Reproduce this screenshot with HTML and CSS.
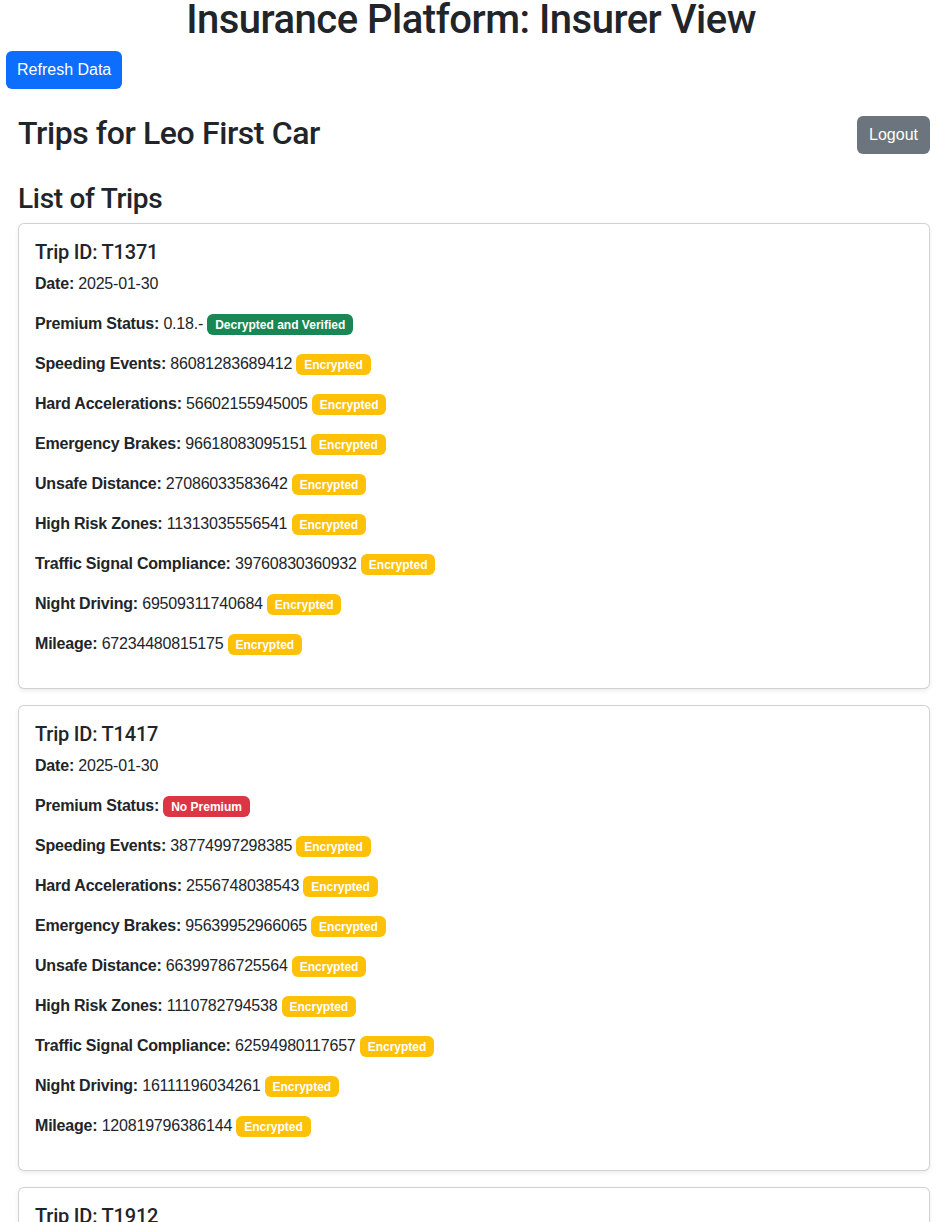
FILE: index.html
```html
<!DOCTYPE html>
<html lang="en">
<head>
<meta charset="utf-8">
<title>Insurance Platform: Insurer View</title>
<link rel="stylesheet" href="styles.css">
</head>
<body>
<div class="app">
  <h1 class="page-title">Insurance Platform: Insurer View</h1>
  <button class="btn btn-primary">Refresh Data</button>
  <div class="content">
    <div class="header-row">
      <h2 class="owner-title">Trips for Leo First Car</h2>
      <button class="btn btn-secondary">Logout</button>
    </div>
    <h3 class="list-title">List of Trips</h3>

    <div class="card">
      <h5 class="card-title">Trip ID: T1371</h5>
      <p><b>Date:</b> 2025-01-30</p>
      <p><b>Premium Status:</b> 0.18.- <span class="badge badge-success">Decrypted and Verified</span></p>
      <p><b>Speeding Events:</b> 86081283689412 <span class="badge badge-warning">Encrypted</span></p>
      <p><b>Hard Accelerations:</b> 56602155945005 <span class="badge badge-warning">Encrypted</span></p>
      <p><b>Emergency Brakes:</b> 96618083095151 <span class="badge badge-warning">Encrypted</span></p>
      <p><b>Unsafe Distance:</b> 27086033583642 <span class="badge badge-warning">Encrypted</span></p>
      <p><b>High Risk Zones:</b> 11313035556541 <span class="badge badge-warning">Encrypted</span></p>
      <p><b>Traffic Signal Compliance:</b> 39760830360932 <span class="badge badge-warning">Encrypted</span></p>
      <p><b>Night Driving:</b> 69509311740684 <span class="badge badge-warning">Encrypted</span></p>
      <p><b>Mileage:</b> 67234480815175 <span class="badge badge-warning">Encrypted</span></p>
    </div>

    <div class="card">
      <h5 class="card-title">Trip ID: T1417</h5>
      <p><b>Date:</b> 2025-01-30</p>
      <p><b>Premium Status:</b> <span class="badge badge-danger">No Premium</span></p>
      <p><b>Speeding Events:</b> 38774997298385 <span class="badge badge-warning">Encrypted</span></p>
      <p><b>Hard Accelerations:</b> 2556748038543 <span class="badge badge-warning">Encrypted</span></p>
      <p><b>Emergency Brakes:</b> 95639952966065 <span class="badge badge-warning">Encrypted</span></p>
      <p><b>Unsafe Distance:</b> 66399786725564 <span class="badge badge-warning">Encrypted</span></p>
      <p><b>High Risk Zones:</b> 1110782794538 <span class="badge badge-warning">Encrypted</span></p>
      <p><b>Traffic Signal Compliance:</b> 62594980117657 <span class="badge badge-warning">Encrypted</span></p>
      <p><b>Night Driving:</b> 16111196034261 <span class="badge badge-warning">Encrypted</span></p>
      <p><b>Mileage:</b> 120819796386144 <span class="badge badge-warning">Encrypted</span></p>
    </div>

    <div class="card">
      <h5 class="card-title">Trip ID: T1912</h5>
      <p><b>Date:</b> 2025-01-30</p>
      <p><b>Premium Status:</b> <span class="badge badge-danger">No Premium</span></p>
      <p><b>Speeding Events:</b> 41822690357120 <span class="badge badge-warning">Encrypted</span></p>
    </div>
  </div>
</div>
</body>
</html>
```

FILE: styles.css
```css
* { box-sizing: border-box; }

html, body {
  margin: 0;
  padding: 0;
  background: #ffffff;
}

body {
  font-family: "Liberation Sans", Arial, sans-serif;
  font-size: 16px;
  line-height: 1.5;
  color: #212529;
}

.app {
  padding: 0 9px 0 6px;
}

.page-title,
.owner-title,
.list-title,
.card-title {
  font-family: Roboto, "Liberation Sans", Arial, sans-serif;
  font-weight: 500;
  color: #212529;
}

.page-title {
  margin: 0 0 11px;
  font-size: 40px;
  line-height: 40px;
  letter-spacing: -0.5px;
  text-align: center;
}

.btn {
  display: inline-block;
  font-family: inherit;
  font-size: 16px;
  line-height: 24px;
  padding: 7px 12px;
  border: 0;
  border-radius: 6px;
  color: #ffffff;
  cursor: pointer;
}

.btn-primary {
  background: #0d6efd;
  padding: 7px 11px;
}

.btn-secondary {
  background: #6c757d;
}

.content {
  padding: 0 6px 0 12px;
}

.header-row {
  display: flex;
  justify-content: space-between;
  align-items: flex-start;
  margin-top: 27px;
}

.owner-title {
  margin: 0;
  font-size: 32px;
  line-height: 34px;
  letter-spacing: -0.4px;
}

.list-title {
  margin: 28px 0 7px;
  font-size: 28px;
  line-height: 33.6px;
  letter-spacing: -0.3px;
}

.card {
  border: 1px solid rgba(0, 0, 0, 0.175);
  border-radius: 6px;
  box-shadow: 0 2px 4px rgba(0, 0, 0, 0.075);
  padding: 16px;
  margin-bottom: 16px;
  background: #ffffff;
}

.card-title {
  margin: 0 0 8px;
  font-size: 20px;
  line-height: 24px;
  letter-spacing: -0.2px;
}

.card p {
  margin: 0 0 16px;
  line-height: 24px;
  letter-spacing: -0.2px;
}

.card b {
  font-weight: 700;
}

.badge {
  display: inline-block;
  font-size: 12px;
  font-weight: 700;
  line-height: 1;
  padding: 4.2px 7.8px;
  border-radius: 6px;
  color: #ffffff;
  white-space: nowrap;
  vertical-align: baseline;
  letter-spacing: 0;
}

.badge-success { background: #198754; }
.badge-warning { background: #ffc107; }
.badge-danger { background: #dc3545; }
```
